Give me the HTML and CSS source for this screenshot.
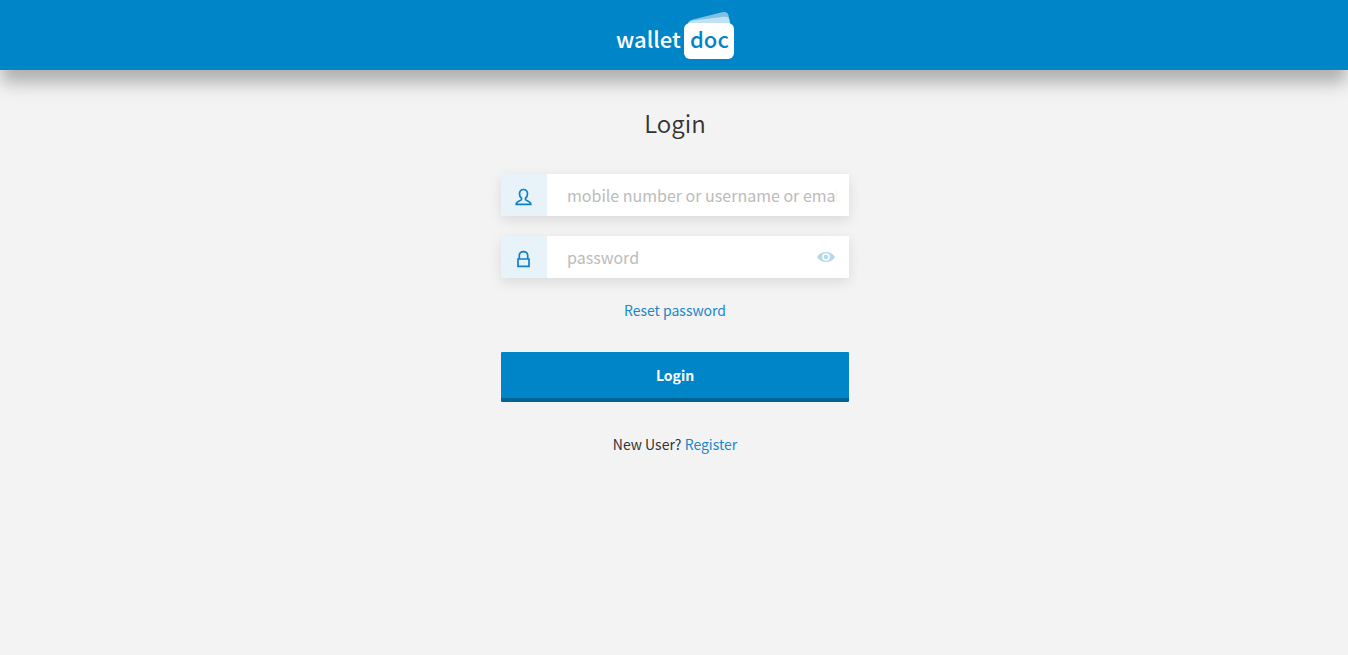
FILE: index.html
```html
<!DOCTYPE html>
<html lang="en">
<head>
<meta charset="utf-8">
<meta name="viewport" content="width=device-width, initial-scale=1">
<title>Login</title>
<link rel="stylesheet" href="styles.css">
</head>
<body>
<header class="site-header">
  <a class="logo" href="#" aria-label="walletdoc">
    <svg width="120" height="50" viewBox="0 0 120 50">
      <path class="card-back" d="M74 14 Q75 11.500 79 10.500 L108 3.300 Q113 2 114.500 6 L116 16 H74 Z"/>
      <path class="card-mid" d="M74 15 Q75 12 79 11.500 L110 7.800 Q115 7.500 115.500 11 L116 16 H74 Z"/>
      <rect class="card-front" x="70" y="14" width="50" height="36" rx="6"/>
      <text class="logo-text" x="2" y="39">wallet</text>
      <text class="logo-text logo-text-doc" x="76" y="39">doc</text>
    </svg>
  </a>
</header>
<main class="content">
  <h1 class="title">Login</h1>
  <form class="login-form">
    <div class="field">
      <label class="field-icon" for="username" aria-label="Username">
        <svg class="icon" width="18" height="18" viewBox="0 0 18 18">
          <path d="M8.500 1.500c-2.600 0-4 1.800-4 4.200 0 2 .8 3.600 2 4.500v1.300c0 1.300-5.300 1.700-5.300 4.800h14.600c0-3.100-5.300-3.500-5.300-4.800v-1.300c1.200-.9 2-2.500 2-4.500 0-2.400-1.400-4.200-4-4.200z"/>
        </svg>
      </label>
      <input class="field-input" id="username" type="text" placeholder="mobile number or username or email">
    </div>
    <div class="field">
      <label class="field-icon" for="password" aria-label="Password">
        <svg class="icon" width="18" height="18" viewBox="0 0 18 18">
          <path d="M3 9h11v7.300H3zM4.300 9V5.500c0-2.300 1.700-3.800 4.200-3.800s4.200 1.500 4.200 3.800V9"/>
        </svg>
      </label>
      <input class="field-input" id="password" type="password" placeholder="password">
      <button class="reveal" type="button" aria-label="Show password">
        <svg width="18" height="10" viewBox="0 0 18 10">
          <path fill-rule="evenodd" fill="#b5dbeb" d="M0 5C2 1.500 5 0 9 0s7 1.500 9 5c-2 3.500-5 5-9 5s-7-1.500-9-5zM9 1.200a3.800 3.800 0 1 0 0 7.600a3.800 3.800 0 1 0 0-7.600z"/>
          <circle cx="9" cy="5" r="2.300" fill="#b5dbeb"/>
        </svg>
      </button>
    </div>
    <a class="link reset" href="#">Reset password</a>
    <button class="submit" type="submit">Login</button>
  </form>
  <p class="register">New User? <a class="link" href="#">Register</a></p>
</main>
</body>
</html>
```
FILE: styles.css
```css
* {
  box-sizing: border-box;
}

body {
  margin: 0;
  min-height: 100vh;
  background: #f3f3f3;
  color: #333;
  font: 14px/20px "Noto Sans CJK SC", "Noto Sans", sans-serif;
}

.site-header {
  display: flex;
  justify-content: center;
  height: 70px;
  padding-top: 9px;
  background: #0085c8;
  box-shadow: 0 14px 14px -2px rgba(0, 0, 0, 0.22), 0 16px 24px rgba(0, 0, 0, 0.07);
}

.logo {
  display: block;
  height: 50px;
}

.logo svg {
  display: block;
}

.card-back {
  fill: #80c2e4;
}

.card-mid {
  fill: #bfe1f1;
}

.card-front {
  fill: #fff;
}

.logo-text {
  fill: #fff;
  font-size: 22px;
  font-weight: 500;
}

.logo-text-doc {
  fill: #0085c8;
}

.content {
  display: flex;
  flex-direction: column;
  align-items: center;
  padding: 36px 16px 36px 18px;
}

.title {
  margin: 0 0 34px;
  font-size: 24px;
  line-height: 34px;
  font-weight: 350;
}

.login-form {
  display: flex;
  flex-direction: column;
  width: 100%;
  max-width: 348px;
}

.field {
  position: relative;
  display: flex;
  height: 42px;
  margin-bottom: 20px;
  background: #fff;
  box-shadow: 0 4px 12px rgba(0, 0, 0, 0.1);
}

.field-icon {
  display: flex;
  flex: none;
  align-items: center;
  justify-content: center;
  width: 46px;
  padding-top: 4px;
  background: #e8f2f9;
}

.icon {
  fill: none;
  stroke: #0e82c8;
  stroke-width: 1.7;
}

.field-input {
  flex: 1;
  min-width: 0;
  padding: 0 12px 0 20px;
  border: 0;
  outline: 0;
  background: transparent;
  color: #333;
  font: inherit;
  font-size: 16px;
}

.field-input::placeholder {
  color: #bbb;
}

.reveal {
  position: absolute;
  top: 0;
  right: 14px;
  display: flex;
  align-items: center;
  height: 42px;
  padding: 0;
  border: 0;
  background: none;
}

.link {
  color: #1b86c9;
  text-decoration: none;
}

.reset {
  align-self: center;
  margin: 2px 0 32px;
}

.submit {
  height: 50px;
  padding: 0;
  border: 0;
  border-bottom: 4px solid #006396;
  border-radius: 1px;
  background: #0085c8;
  color: #fff;
  font: inherit;
  font-weight: 700;
}

.register {
  margin: 32px 0 0;
}
```
